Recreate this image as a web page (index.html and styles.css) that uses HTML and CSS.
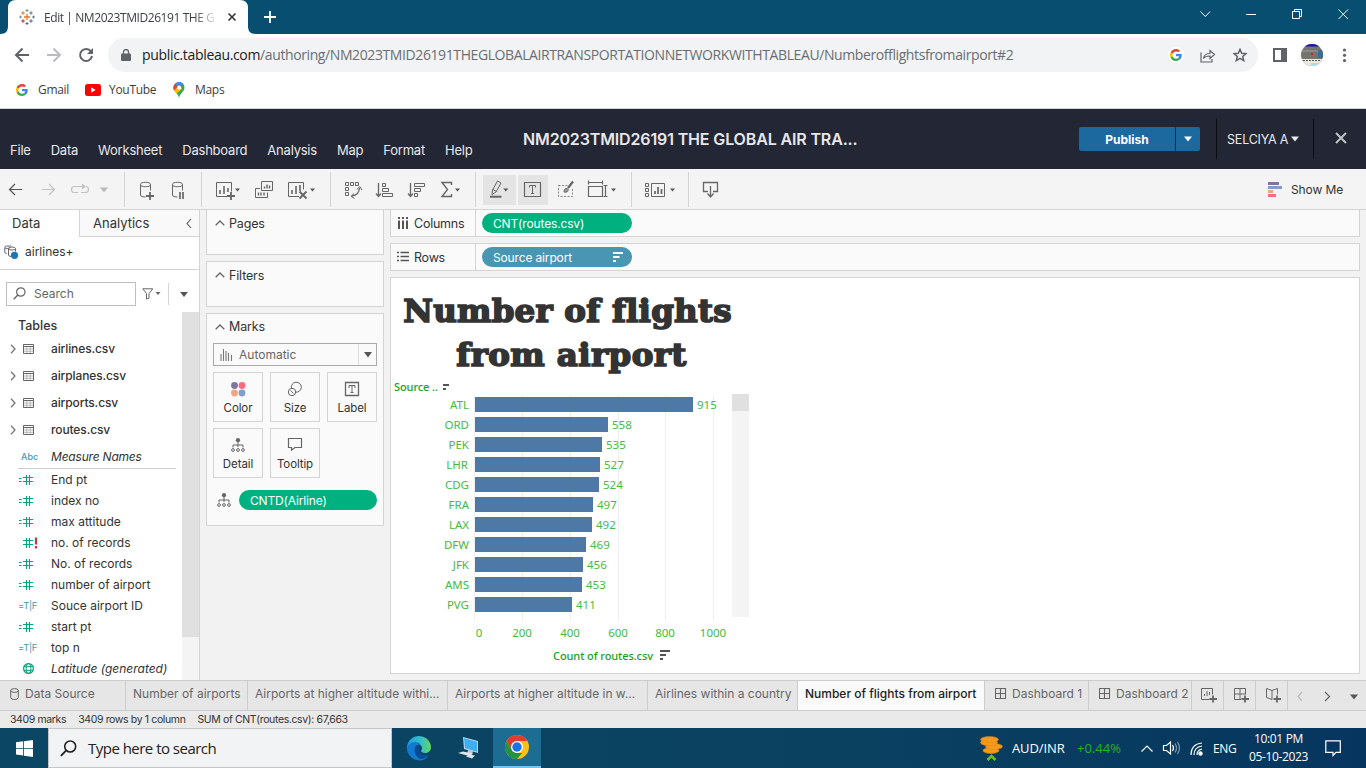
FILE: index.html
```html
<!DOCTYPE html>
<html lang="en">
<head>
<meta charset="utf-8">
<title>Edit | NM2023TMID26191 THE GLOBAL AIR TRANSPORTATION NETWORK</title>
<link rel="stylesheet" href="styles.css">
</head>
<body>
<svg class="defs" width="0" height="0">
  <symbol id="g" viewBox="0 0 48 48"><path fill="#ea4335" d="M24 9.5c3.5 0 6.700 1.200 9.200 3.600l6.900-6.900C35.900 2.400 30.500 0 24 0 14.600 0 6.500 5.400 2.600 13.200l8 6.200C12.400 13.700 17.700 9.500 24 9.500z"/><path fill="#4285f4" d="M47 24.600c0-1.600-.2-3.100-.4-4.600H24v9h12.900c-.6 3-2.300 5.500-4.800 7.200l7.700 6C44.400 38 47 31.800 47 24.600z"/><path fill="#fbbc05" d="M10.500 28.600a14.500 14.500 0 0 1 0-9.200l-8-6.200a24 24 0 0 0 0 21.600z"/><path fill="#34a853" d="M24 48c6.500 0 11.900-2.100 15.900-5.800l-7.700-6c-2.200 1.500-4.900 2.300-8.200 2.300-6.300 0-11.600-4.200-13.500-9.900l-8 6.200C6.500 42.600 14.600 48 24 48z"/></symbol>
  <symbol id="table" viewBox="0 0 11 10"><path d="M.5.500h10v9H.500zM.5 2.500h10" fill="none" stroke="#666"/><path d="M1 5h9M1 7.300h9M3.800 3v6M7.200 3v6" stroke="#aaa" stroke-width=".8"/></symbol>
  <symbol id="chev" viewBox="0 0 6 10"><path d="M1 .8l4 4.200-4 4.200" fill="none" stroke="#777" stroke-width="1.300"/></symbol>
  <symbol id="up" viewBox="0 0 10 6"><path d="M.7 5.300L5 1l4.300 4.300" fill="none" stroke="#666" stroke-width="1.300"/></symbol>
  <symbol id="hash" viewBox="0 0 16 12"><path d="M5 3.500h10M5 7.500h10M8.500 1v10M11.500 1v10M1 4.500h2.500M1 7.500h2.500" stroke="#00a67c" stroke-width="1.100"/></symbol>
  <symbol id="tree" viewBox="0 0 14 14"><circle cx="7" cy="2.200" r="2.100" fill="#666"/><path d="M7 4v5M2 9.500V7h10v2.500" fill="none" stroke="#666"/><g fill="none" stroke="#666"><circle cx="2" cy="12" r="1.400"/><circle cx="7" cy="12" r="1.400"/><circle cx="12" cy="12" r="1.400"/></g></symbol>
  <symbol id="dash" viewBox="0 0 12 12"><path d="M.5.500h10v10H.500zM.5 5.500h10M5.500.5v10" fill="none" stroke="#666" stroke-width="1.100"/></symbol>
  <symbol id="mag" viewBox="0 0 13 13"><circle cx="7.800" cy="5" r="4.200" fill="none" stroke="currentColor" stroke-width="1.200"/><path d="M4.800 8L.7 12.200" stroke="currentColor" stroke-width="1.400"/></symbol>
  <symbol id="sort" viewBox="0 0 10 10"><path d="M0 1h10M0 5h6.500M0 9h3" stroke="currentColor" stroke-width="2"/></symbol>
</svg>

<header class="tabstrip">
  <svg class="tabshape" viewBox="0 0 256 34"><path fill="#fff" d="M0 34c6 0 8-3 8-8V8q0-8 8-8h224q8 0 8 8v18c0 5 2 8 8 8z"/></svg>
  <div class="tab">
    <svg width="16" height="16" viewBox="0 0 16 16" fill="none" stroke-width="1"><path d="M8 5v6M5 8h6" stroke="#e8762d" stroke-width="1.300"/><path d="M4 2.200v3.600M2.200 4h3.600" stroke="#e8762d"/><path d="M12 10.200v3.600M10.200 12h3.600M8 13v3M6.500 14.500h3" stroke="#5b6591"/><path d="M4 10.200v3.600M2.200 12h3.600" stroke="#c72035"/><path d="M12 2.200v3.600M10.200 4h3.600M14.500 6.500v3M13 8h3" stroke="#5c7f92"/><path d="M8 0v3M6.500 1.500h3M1.500 6.500v3M0 8h3" stroke="#7099a6"/></svg>
    <span class="tabname">Edit | NM2023TMID26191 THE G</span>
    <svg width="10" height="10" viewBox="0 0 10 10"><path d="M1.500 1.500l7 7M8.500 1.500l-7 7" stroke="#333" stroke-width="1.600"/></svg>
  </div>
  <svg class="plus" width="14" height="14" viewBox="0 0 14 14"><path d="M7 1v12M1 7h12" stroke="#fff" stroke-width="1.800"/></svg>
  <svg class="wincontrols" width="166" height="34" viewBox="1200 0 166 34" fill="none" stroke="#fff"><path d="M1200.500 11.500l4.800 5 4.800-5"/><path d="M1246 14.500h10"/><path d="M1292.500 11.500h7v7h-7zM1294.500 11v-1.500h7v7h-1.500"/><path d="M1338.500 9.500l9.500 9.500M1348 9.500l-9.500 9.500"/></svg>
</header>

<div class="navbar">
  <svg width="100" height="42" viewBox="0 34 100 42" fill="none" stroke-width="2"><path d="M29 55H16.500M22.500 48.500L16 55l6.500 6.500" stroke="#5f6368"/><path d="M47 55h12.500M53.500 48.500L60 55l-6.500 6.500" stroke="#babcbe"/><path d="M91 51.500a6 6 0 1 0 1 4.500" stroke="#5f6368"/><path d="M93 48v6h-6z" fill="#5f6368"/></svg>
  <div class="urlbar">
    <svg width="10" height="13" viewBox="0 0 10 13"><path d="M1 4.500h8q1 0 1 1V11q0 1-1 1H1q-1 0-1-1V5.500q0-1 1-1z" fill="#5f6368"/><path d="M2.500 5V3a2.500 2.500 0 0 1 5 0v2" fill="none" stroke="#5f6368" stroke-width="1.300"/></svg>
    <span class="url"><b>public.tableau.com</b>/authoring/NM2023TMID26191THEGLOBALAIRTRANSPORTATIONNETWORKWITHTABLEAU/Numberofflightsfromairport#2</span>
    <i class="gbadge"><svg width="12" height="12"><use href="#g"/></svg></i>
    <svg width="16" height="15" viewBox="0 0 16 15" fill="none" stroke="#5f6368" stroke-width="1.200"><path d="M1 4.500v9.500h11v-3M3.500 10.500c.5-3.500 3-5 6.500-5V2.500l4.500 4-4.500 4V8c-3 0-5 .5-6.500 2.500z"/></svg>
    <svg class="star" width="14" height="14" viewBox="0 0 14 14" fill="none" stroke="#5f6368" stroke-width="1.500"><path d="M7 1.400l1.700 3.900 4.200.4-3.200 2.800 1 4.100L7 10.400l-3.700 2.200 1-4.100L1.100 5.700l4.200-.4z"/></svg>
  </div>
  <svg width="92" height="42" viewBox="1270 34 92 42"><path d="M1274 49h12v12h-12z" fill="none" stroke="#5f6368" stroke-width="2"/><path d="M1281 49h5v12h-5z" fill="#5f6368"/>
    <clipPath id="av"><circle cx="1312" cy="55" r="11"/></clipPath><g clip-path="url(#av)"><path fill="#77746b" d="M1300 43h24v24h-24z"/><path fill="#1b12b8" d="M1300 43h24v3.500h-24z"/><path fill="#85898a" d="M1300 50h24v2h-24z"/><path fill="#3c6c98" d="M1318 50h6v8h-6z"/><path fill="#b92c2c" d="M1311 53h2v2h-2z"/><path fill="#e9e9df" d="M1300 59h24v8h-24z"/><path stroke="#555" stroke-dasharray="2 1" d="M1303 60.500h18"/><path fill="#a9dcee" d="M1311 63h12v4h-12z"/></g>
    <g fill="#5f6368"><circle cx="1344.500" cy="50" r="1.600"/><circle cx="1344.500" cy="55.300" r="1.600"/><circle cx="1344.500" cy="60.600" r="1.600"/></g></svg>
</div>

<div class="bookmarks">
  <svg width="12" height="12"><use href="#g"/></svg><span class="bm1">Gmail</span>
  <svg width="16" height="12" viewBox="0 0 16 12"><rect width="16" height="12" rx="2.500" fill="#f00"/><path d="M6.200 3.300v5.400L10.600 6z" fill="#fff"/></svg><span class="bm2">YouTube</span>
  <svg width="12" height="16" viewBox="0 0 12 16"><path fill="#34a853" d="M6 0a5.500 5.500 0 0 1 5.500 5.500C11.500 9.500 7 11 6 16 5 11 .5 9.500.5 5.500A5.500 5.500 0 0 1 6 0z"/><path fill="#fbbc04" d="M.9 7.500L7 2l2 5-5.500 4.500C2.300 10.200 1.300 9 .9 7.500z"/><path fill="#4285f4" d="M2 2L6 5.500 10.300 2A5.500 5.500 0 0 0 4 .4z"/><path fill="#ea4335" d="M2 2L5 4.500 1 8.500A5.500 5.500 0 0 1 2 2z"/><circle cx="6" cy="5.500" r="2" fill="#fff"/></svg><span>Maps</span>
</div>

<div class="apphead">
  <nav class="menu"><span>File</span><span>Data</span><span>Worksheet</span><span>Dashboard</span><span>Analysis</span><span>Map</span><span>Format</span><span>Help</span></nav>
  <h1>NM2023TMID26191 THE GLOBAL AIR TRA...</h1>
  <div class="account">
    <div class="publish">Publish</div><div class="pubmore"><svg width="8" height="6"><path d="M0 .5h8L4 5.500z" fill="#fff"/></svg></div>
    <div class="user"><span>SELCIYA A</span><svg width="8" height="6"><path d="M0 .5h8L4 5.500z" fill="#eee"/></svg></div>
    <svg width="12" height="12"><path d="M1 1l10 10M11 1L1 11" stroke="#c3c3c8" stroke-width="1.900"/></svg>
  </div>
</div>

<div class="toolbar">
  <svg width="124" height="40" viewBox="0 169 124 40" fill="none" stroke-width="1.200"><path d="M22 189.500H9.500M15 184l-5.500 5.500 5.500 5.500" stroke="#555"/><g stroke="#c2c2c2"><path d="M42 189.500h12.500M49 184l5.500 5.500-5.500 5.500"/><path d="M78 192.500h-4q-2.500 0-2.500-3t2.500-3h10M81 192.500h4.500q3 0 3-3t-2.500-3"/></g><path d="M82 183.500v6l4-3z" fill="#c2c2c2"/><path d="M100 187.500h8l-4 5z" fill="#bbb"/></svg>
  <svg width="77" height="40" viewBox="124 169 77 40" fill="none" stroke="#666"><path d="M140.500 184.500v11q1 1.500 5 1.500M150.500 184.500v6"/><ellipse cx="145.500" cy="184.500" rx="5" ry="2.200"/><path d="M150 192v8M146 196h8" stroke-width="1.800"/><path d="M172.500 184.500v11q1 1.500 5 1.500M182.500 184.500v6"/><ellipse cx="177.500" cy="184.500" rx="5" ry="2.200"/><path d="M180 192v7M183 192v7" stroke-width="1.700"/></svg>
  <svg width="129" height="40" viewBox="201 169 129 40" fill="none" stroke="#666"><path d="M227 196.500h-10.500v-14h15v9"/><path d="M220 194v-4M224 194v-8M228 192v-4" stroke-width="1.600"/><path d="M231 192v8M227 196h8" stroke-width="1.800"/><path d="M235 188.500h5l-2.500 3z" fill="#555" stroke="none"/><path d="M261.500 181.500h11v9h-11zM260 188.500h-4.500v9h12v-5"/><path d="M264.500 188.500v-2M267 188.500v-4M269.500 188.500v-3M258.500 195.500v-3M261 195.500v-3M264 195.500v-3" stroke-width="1.400"/><path d="M299 196.500h-10.500v-14h15v7"/><path d="M292 194v-4M296 194v-8M300 191v-6" stroke-width="1.600"/><path d="M299.500 191.500l7 7M306.500 191.500l-7 7" stroke-width="1.800"/><path d="M310 188.500h5l-2.500 3z" fill="#555" stroke="none"/></svg>
  <svg width="145" height="40" viewBox="330 169 145 40" fill="none" stroke="#666"><path d="M345.500 182.500h3v3h-3zM350.500 182.500h3v3h-3zM355.500 182.500h3v3h-3zM345.500 187.500h3v3h-3zM345.500 192.500h3v3h-3z"/><path d="M352 196q7-1 7.500-8" stroke-width="1.300"/><path d="M357 189.500l2.700-3 2.300 3.500M354 193.500l-3 2.800 3.500 2.200"/><path d="M378.500 183v13M376 193.500l2.500 3 2.500-3" stroke-width="1.300"/><path d="M382.500 183.500h3v3h-3zM382.500 188.500h6v3h-6zM382.500 193.500h10v3h-10z"/><path d="M410.500 183v13M408 193.500l2.500 3 2.500-3" stroke-width="1.300"/><path d="M414.500 183.500h10v3h-10zM414.500 188.500h6v3h-6zM414.500 193.500h3v3h-3z"/><path d="M451.500 185v-2.500H442l5.500 7-5.500 7h9.500V194" stroke-width="1.400"/><path d="M455 188.500h5l-2.500 3z" fill="#555" stroke="none"/></svg>
  <svg width="156" height="40" viewBox="475 169 156 40" fill="none" stroke="#666"><path d="M483 175h33v30h-33zM518 175h30v30h-30z" fill="#e4e4e4" stroke="none"/><path d="M492.500 190l5-9 3.500 2-5 9-4 2.500zM493 189.500l3.500 2"/><path d="M490 196.700h11.500" stroke-width="2"/><path d="M503.300 188.500h5l-2.500 3z" fill="#555" stroke="none"/><path d="M524.500 182.500h16v14h-16z" stroke-width="1.200"/><path d="M529.500 187.500v-2h6v2M532.500 185.500v8M531 193.500h3"/><path d="M558.500 185.500h9M572.500 189v7.500h-14v-11" stroke="#888" stroke-dasharray="2 1.500"/><path d="M573 181.500l-5 6.500" stroke-width="2.200"/><path d="M567.500 188.500q-3.500-.5-3.500 3.500 3.500 1 4.500-2.500" fill="#999"/><path d="M588.500 182.500h14M588.500 180.500v4M602.500 180.500v4M588.500 186.500h14v10h-14zM605.500 185.500v11M603.500 185.500h4M603.500 196.500h4" stroke-width="1.200"/><path d="M611 188.500h5l-2.500 3z" fill="#555" stroke="none"/></svg>
  <svg width="57" height="40" viewBox="631 169 57 40" fill="none" stroke="#666"><path d="M645.500 183.500h3v3h-3zM645.500 188.500h3v3h-3zM645.500 193.500h3v3h-3zM651.500 183.500h13v13h-13z"/><path d="M655 194v-3M658 194v-7M661.500 194v-5" stroke-width="1.700"/><path d="M670 188.500h5l-2.500 3z" fill="#555" stroke="none"/></svg>
  <svg width="40" height="40" viewBox="688 169 40 40" fill="none" stroke="#666" stroke-width="1.300"><path d="M708 191.500h-4.500v-9h14v9H713M710.500 186v11M707.500 193.500l3 3.500 3-3.500"/></svg>
  <div class="showme"><svg width="14" height="15"><path fill="#8074a0" d="M0 0h11v3H0z"/><path fill="#7f9ecb" d="M0 4h14v3H0z"/><path fill="#f2a47c" d="M0 8h5v3H0z"/><path fill="#fb6b7c" d="M0 12h8v3H0z"/></svg><span>Show Me</span></div>
</div>

<main>
  <aside class="data">
    <div class="dtabs"><div class="dt on">Data</div><div class="dt2"><span>Analytics</span><svg width="6" height="11" viewBox="0 0 6 11"><path d="M5 1L1 5.500l4 4.500" fill="none" stroke="#555" stroke-width="1.100"/></svg></div></div>
    <div class="source"><svg width="15" height="14" viewBox="0 0 15 14" fill="none" stroke="#666"><path d="M7 1H2.500Q.8 1 .8 2.500V7q0 1.500 2 1.500M.8 3q3 1 5 0"/><ellipse cx="8" cy="3.500" rx="3.500" ry="1.500"/><path d="M4.500 3.500V10q0 1.500 2.500 1.500M11.500 3.500v3"/><circle cx="10.500" cy="10.300" r="3.600" fill="#1f77b0" stroke="none"/></svg><span>airlines+</span></div>
    <div class="searchrow"><div class="search"><svg width="13" height="13"><use href="#mag"/></svg><span>Search</span></div>
      <svg width="20" height="12" viewBox="0 0 20 12"><path d="M.8.800h10L7 5.500v4.700l-2.500.8V5.500z" fill="none" stroke="#666"/><path d="M13.500 4h5L16 7z" fill="#666"/></svg><i class="vline"></i><svg width="8" height="5"><path d="M0 0h8L4 5z" fill="#555"/></svg></div>
    <div class="tree">
      <div class="list">
        <div class="th">Tables</div>
        <div class="tr"><svg width="6" height="10"><use href="#chev"/></svg><svg width="11" height="10"><use href="#table"/></svg><span>airlines.csv</span></div>
        <div class="tr"><svg width="6" height="10"><use href="#chev"/></svg><svg width="11" height="10"><use href="#table"/></svg><span>airplanes.csv</span></div>
        <div class="tr"><svg width="6" height="10"><use href="#chev"/></svg><svg width="11" height="10"><use href="#table"/></svg><span>airports.csv</span></div>
        <div class="tr"><svg width="6" height="10"><use href="#chev"/></svg><svg width="11" height="10"><use href="#table"/></svg><span>routes.csv</span></div>
        <div class="mn"><b>Abc</b><em>Measure Names</em></div>
        <div class="fd"><svg width="16" height="12"><use href="#hash"/></svg><span>End pt</span></div>
        <div class="fd"><svg width="16" height="12"><use href="#hash"/></svg><span>index no</span></div>
        <div class="fd"><svg width="16" height="12"><use href="#hash"/></svg><span>max attitude</span></div>
        <div class="fd bad"><svg width="20" height="12" viewBox="0 0 20 12"><path d="M5 3.500h10M5 7.500h10M8.500 1v10M11.500 1v10" stroke="#00a67c" stroke-width="1.100"/><path d="M18 .5v7M18 9v2.500" stroke="#c9364a" stroke-width="2.200"/></svg><span>no. of records</span></div>
        <div class="fd"><svg width="16" height="12"><use href="#hash"/></svg><span>No. of records</span></div>
        <div class="fd"><svg width="16" height="12"><use href="#hash"/></svg><span>number of airport</span></div>
        <div class="fd"><b>=T|F</b><span>Souce airport ID</span></div>
        <div class="fd"><svg width="16" height="12"><use href="#hash"/></svg><span>start pt</span></div>
        <div class="fd"><b>=T|F</b><span>top n</span></div>
        <div class="fd"><svg class="globe" width="11" height="11" viewBox="0 0 11 11" fill="none" stroke="#00a67c"><circle cx="5.500" cy="5.500" r="4.900" stroke-width="1.200"/><ellipse cx="5.500" cy="5.500" rx="2.300" ry="4.900"/><path d="M.8 3.700h9.400M.8 7.300h9.400"/></svg><em>Latitude (generated)</em></div>
      </div>
      <div class="scroll"><i></i></div>
    </div>
  </aside>

  <section class="cards">
    <div class="card small"><h2><svg width="10" height="6"><use href="#up"/></svg>Pages</h2></div>
    <div class="card small"><h2><svg width="10" height="6"><use href="#up"/></svg>Filters</h2></div>
    <div class="card marks"><h2><svg width="10" height="6"><use href="#up"/></svg>Marks</h2>
      <div class="select"><svg width="13" height="13" viewBox="0 0 13 13" stroke-width="1.100"><path d="M1 13V6M3.500 13V1M6 13V3M8.500 13V5M11.500 13V7" stroke="#777"/></svg><span>Automatic</span><i><svg width="8" height="6"><path d="M0 0h8L4 5.500z" fill="#555"/></svg></i></div>
      <div class="btns">
        <div><svg width="16" height="16"><circle cx="4.500" cy="4.500" r="3.400" fill="#8074a0"/><circle cx="12" cy="4.500" r="3.400" fill="#fb6b7c"/><circle cx="4.500" cy="12" r="3.400" fill="#f2a47c"/><circle cx="12" cy="12" r="3.400" fill="#7f9ecb"/></svg><span>Color</span></div>
        <div><svg width="16" height="16" fill="none" stroke="#666"><path d="M4.500 7.500A5 5 0 1 1 8 11"/><circle cx="5" cy="11" r="3.700"/><path d="M3.500 9.500l3 3"/></svg><span>Size</span></div>
        <div><svg width="16" height="16" fill="none" stroke="#666"><path d="M1.500 1.500h13v13h-13z" stroke-width="1.300"/><path d="M5 7V4.500h6V7M8 4.500v7M6.500 11.500h3"/></svg><span>Label</span></div>
        <div><svg width="16" height="16"><use href="#tree" x="1" y="1" width="14" height="14"/></svg><span>Detail</span></div>
        <div><svg width="16" height="16" fill="none" stroke="#666" stroke-width="1.200"><path d="M1.500 1.500h13v9H8L4.500 13v-2.500h-3z"/></svg><span>Tooltip</span></div>
      </div>
      <div class="enc"><svg width="14" height="14"><use href="#tree"/></svg><div class="pill green">CNTD(Airline)</div></div>
    </div>
  </section>

  <section class="work">
    <div class="shelf"><div class="sl"><svg width="12" height="12" stroke="#555" stroke-width="2"><path d="M2 0v2M2 3.500V12M6 0v2M6 3.500V12M10 0v2M10 3.500V12"/></svg><span>Columns</span></div><div class="pill green">CNT(routes.csv)</div></div>
    <div class="shelf"><div class="sl"><svg width="12" height="12" stroke="#555" stroke-width="1.700"><path d="M0 1.500h2M3.500 1.500H12M0 5.500h2M3.500 5.500H12M0 9.500h2M3.500 9.500H12"/></svg><span>Rows</span></div><div class="pill blue">Source airport<svg width="10" height="10"><use href="#sort"/></svg></div></div>
    <div class="view">
      <div class="vtitle"><div class="l1">Number of flights</div><div class="l2">from airport</div></div>
      <svg class="chart" width="368" height="296" viewBox="391 378 368 296">
        <path d="M474.500 395v226M522.500 395v226M570.500 395v226M618.500 395v226M665.500 395v226M713.500 395v226" stroke="#efefef"/>
        <text class="hdr" x="394" y="391" textLength="44">Source ..</text>
        <path d="M443 385h6M443 389h3" stroke="#555" stroke-width="2"/>
        <g fill="#4e79a7"><path d="M475 397h218v15H475zM475 417h133v15H475zM475 437h127v15H475zM475 457h125v15H475zM475 477h124v15H475zM475 497h118v15H475zM475 517h117v15H475zM475 537h111v15H475zM475 557h108v15H475zM475 577h107v15H475zM475 597h97v15H475z"/></g>
        <g class="lab" text-anchor="end"><text x="469" y="409">ATL</text><text x="469" y="429">ORD</text><text x="469" y="449">PEK</text><text x="468" y="469">LHR</text><text x="469" y="489">CDG</text><text x="469" y="509">FRA</text><text x="469" y="529">LAX</text><text x="469" y="549">DFW</text><text x="469" y="569">JFK</text><text x="469" y="589">AMS</text><text x="469" y="609">PVG</text></g>
        <g class="lab"><text x="697" y="409">915</text><text x="612" y="429">558</text><text x="606" y="449">535</text><text x="604" y="469">527</text><text x="603" y="489">524</text><text x="597" y="509">497</text><text x="596" y="529">492</text><text x="590" y="549">469</text><text x="587" y="569">456</text><text x="586" y="589">453</text><text x="576" y="609">411</text></g>
        <g class="lab" text-anchor="middle"><text x="479" y="637">0</text><text x="522" y="637">200</text><text x="570" y="637">400</text><text x="618" y="637">600</text><text x="665" y="637">800</text><text x="713" y="637">1000</text></g>
        <text class="hdr" x="553" y="660" textLength="100">Count of routes.csv</text>
        <path d="M660 651h10M660 655h6M660 659h3" stroke="#555" stroke-width="2"/>
        <path fill="#f4f4f4" d="M732 394h17v223h-17z"/><path fill="#e0e0e0" d="M732 394h17v17h-17z"/>
      </svg>
    </div>
  </section>
</main>

<div class="sheets">
  <div class="s0"><svg width="9" height="12" viewBox="0 0 9 12" fill="none" stroke="#666"><ellipse cx="4.500" cy="2.500" rx="3.800" ry="1.900"/><path d="M.7 2.500v7q0 2 3.800 2t3.800-2v-7"/></svg>Data Source</div>
  <div class="s1">Number of airports</div><div class="s2">Airports at higher altitude withi...</div><div class="s3">Airports at higher altitude in w...</div><div class="s4">Airlines within a country</div><div class="s5">Number of flights from airport</div>
  <div class="s6"><svg width="12" height="12"><use href="#dash"/></svg>Dashboard 1</div><div class="s7"><svg width="12" height="12"><use href="#dash"/></svg>Dashboard 2</div>
  <div class="ic"><svg width="16" height="16" fill="none" stroke="#666"><path d="M8.500 12.500H.500V1.500h11v6"/><path d="M3.500 9V7M6 9V4M8.500 8V5"/><path d="M12 8.500v7M8.500 12H16" stroke-width="1.800"/></svg></div>
  <div class="ic"><svg width="16" height="16" fill="none" stroke="#666"><path d="M8 12.500H1.500V1.500h11v6M1.500 7h11M7 1.500v11"/><path d="M12 8.500v7M8.500 12H16" stroke-width="1.800"/></svg></div>
  <div class="ic"><svg width="16" height="16" fill="none" stroke="#666"><path d="M7 12.500l-5.500-2V1.500l5.500 2 5.500-2v6M7 3.500v9"/><path d="M12 8.500v7M8.500 12H16" stroke-width="1.800"/></svg></div>
  <svg width="78" height="30" viewBox="1288 681 78 30" fill="none" stroke-width="1.200"><path d="M1302 692l-4 4.500 4 4.500" stroke="#bbb"/><path d="M1325 692l4.500 4.500-4.500 4.500" stroke="#666"/><path d="M1350 694.500h8l-4 5z" fill="#555"/></svg>
</div>
<div class="status"><span>3409 marks</span><span>3409 rows by 1 column</span><span>SUM of CNT(routes.csv): 67,663</span></div>

<footer class="taskbar">
  <div class="start"><svg width="17" height="17" viewBox="0 0 17 17" fill="#fff"><path d="M0 2.300L7.200 1.300V8H0zM8 1.200L17 0v8H8zM0 8.800h7.200v6.700L0 14.500zM8 8.800h9V17l-9-1.300z"/></svg></div>
  <div class="tsearch"><svg width="17" height="17"><use href="#mag"/></svg><span>Type here to search</span></div>
  <div class="app"><svg width="26" height="26" viewBox="0 0 26 26"><defs><linearGradient id="e1" x1="0" x2="1"><stop stop-color="#1b9de2"/><stop offset=".6" stop-color="#35c1c8"/><stop offset="1" stop-color="#62d756"/></linearGradient></defs><path d="M1 14A12 12 0 0 1 25 12c0 4-3 6-6 6-2 0-4-1-4-2s1-1 1-3c0-2-2-4-5-4-4 0-8 2-10 5z" fill="url(#e1)"/><path d="M1 14c0-4 4-7 8-7 3 0 5 1 6 3-5-1-7 3-6 7 1 5 6 6 13 4-3 5-10 5.500-14 3-4-2-7-6-7-10z" fill="#137ad2"/><path d="M11 11c-4 4-2 10 3 13 4 0 7-2 9-5-5 2-10-1-10-5 0-1 .5-2 1-3z" fill="#0b4b96"/></svg></div>
  <div class="app"><svg width="24" height="24" viewBox="0 0 24 24"><path d="M7 1l15 4v12L8 13z" fill="#bcd6e5"/><path d="M8 2.300l13 3.500v10L9 12z" fill="#3eaef2"/><path d="M12 14l5 1-1 4-5-1z" fill="#c3cbd0"/><path d="M2 17l5-1.500 10 2-4 2.500zM10 20.500l3-2 6 1-3 3z" fill="#e0e4e6"/></svg></div>
  <div class="app on"><svg width="24" height="24" viewBox="0 0 24 24"><circle cx="12" cy="12" r="12" fill="#fbc116"/><path d="M12 0a12 12 0 0 1 10.400 6H12L6.800 15 1.600 6A12 12 0 0 1 12 0z" fill="#e33b2e"/><path d="M1.600 6l5.200 9L12 18h5.200L12 24A12 12 0 0 1 1.600 6z" fill="#229342"/><circle cx="12" cy="12" r="6" fill="#fff"/><circle cx="12" cy="12" r="4.700" fill="#1a73e8"/></svg></div>
  <div class="tray">
    <svg width="23" height="26" viewBox="0 0 23 26"><g fill="#f39a1e" stroke="#e08612" stroke-width=".5"><ellipse cx="11" cy="15.500" rx="8" ry="3"/><ellipse cx="14" cy="11.500" rx="8.500" ry="3"/><ellipse cx="9" cy="7.500" rx="8.500" ry="3.200"/><ellipse cx="9.500" cy="4.500" rx="9" ry="3"/></g><path d="M7.500 25l4-4 4 4" stroke="#6cc024" stroke-width="2.600" fill="none"/></svg>
    <span class="fx">AUD/INR</span><span class="pct">+0.44%</span>
    <svg class="tico" width="66" height="40" viewBox="1140 728 66 40" fill="none" stroke="#fff" stroke-width="1.200"><path d="M1141.500 751.500l5.500-5.500 5.500 5.500"/><path d="M1163.500 745.500h3l4-3.500v12l-4-3.500h-3z"/><path d="M1172.500 745q2 3 0 6"/><path d="M1175 743.500q3 4.500 0 9M1177.500 742q4 6 0 12" stroke="#7f9bb1"/><path d="M1191 755q0-11 11-12M1194 755q0-8 8-9M1197 755q0-5 5-6" /><circle cx="1200.500" cy="753.500" r="1.600" fill="#fff"/></svg>
    <span class="eng">ENG</span>
    <div class="clock"><span>10:01 PM</span><span>05-10-2023</span></div>
    <svg width="16" height="17" fill="none" stroke="#fff" stroke-width="1.200"><path d="M.8.800h14.500v11.500H11L8 15.500v-3.200H.800z"/></svg>
  </div>
</footer>
</body>
</html>
```
FILE: styles.css
```css
* { box-sizing: border-box; }
body { margin: 0; width: 1366px; height: 768px; overflow: hidden; background: #f2f2f2; font-family: Inter, "Liberation Sans", sans-serif; font-size: 12px; color: #333; white-space: nowrap; }
svg { display: block; flex: none; }
.defs { position: absolute; }
i, b { font-style: normal; }

.tabstrip { position: relative; height: 34px; background: #074e70; display: flex; align-items: center; font-family: "Open Sans", sans-serif; }
.tabshape { position: absolute; left: 0; top: 0; width: 256px; height: 34px; }
.tab { position: relative; width: 248px; padding-left: 19px; display: flex; align-items: center; }
.tabname { width: 174px; margin: 0 9px 0 9px; overflow: hidden; font-size: 12px; letter-spacing: -.42px; -webkit-mask-image: linear-gradient(90deg, #000 150px, transparent 174px); mask-image: linear-gradient(90deg, #000 150px, transparent 174px); color: #3c4043; }
.plus { margin-left: 15px; }
.wincontrols { margin-left: auto; }

.navbar { height: 42px; background: #fff; display: flex; align-items: center; }
.urlbar { margin-left: 8px; width: 1150px; height: 34px; border-radius: 17px; background: #f1f3f4; display: flex; align-items: center; padding-left: 13px; font-family: "Open Sans", sans-serif; font-size: 14px; }
.url { width: 1026px; margin: -2px 0 0 11px; color: #6a6e73; letter-spacing: -.4px; }
.url b { font-weight: 400; color: #202124; letter-spacing: -.33px; }
.gbadge { width: 16px; height: 16px; border-radius: 8px; background: #fff; display: grid; place-items: center; margin-right: 16px; }
.star { margin-left: 17px; }
.navbar > svg:last-child { margin-left: 12px; }

.bookmarks { height: 33px; background: #fff; border-bottom: 1px solid #cfd3d6; display: flex; align-items: center; padding: 0 0 5px 16px; font-family: "Open Sans", sans-serif; font-size: 12px; letter-spacing: -.3px; color: #3c4043; }
.bookmarks span { margin-left: 10px; }
.bookmarks .bm1 { width: 47px; }
.bookmarks .bm2 { width: 64px; margin-left: 8px; }

.apphead { height: 60px; background: #232635; color: #e8e8ea; display: grid; grid-template-columns: 523px 556px 1fr; align-items: center; }
.menu { display: flex; padding: 21px 0 0 10px; gap: 20px; font-size: 13px; letter-spacing: -.22px; }
.apphead h1 { margin: 0; font-size: 16px; font-weight: 600; letter-spacing: -.14px; }
.account { display: flex; align-items: center; }
.publish { width: 96px; height: 24px; background: #1b699f; border-radius: 2px 0 0 2px; font-size: 12px; font-weight: 700; color: #fff; display: grid; place-items: center; }
.pubmore { width: 24px; height: 24px; margin-left: 1px; background: #1b699f; border-radius: 0 2px 2px 0; display: grid; place-items: center; }
.user { margin-left: 16px; width: 98px; height: 40px; flex: none; border: solid #0b0c12; border-width: 0 1px; display: flex; align-items: center; gap: 3px; padding-left: 10px; font-size: 12.500px; letter-spacing: -.2px; }
.account > svg { margin: -2px 0 0 21px; }

.toolbar { height: 40px; background: #f4f4f4; display: flex; }
.toolbar > svg + svg { background: linear-gradient(#d4d4d4, #d4d4d4) 0 3px / 1px 35px no-repeat; }
.showme { margin-left: auto; width: 98px; display: flex; align-items: center; gap: 9px; font-size: 12px; letter-spacing: -.1px; }

main { height: 471px; display: grid; grid-template-columns: 200px 184px 976px; border-top: 1px solid #d4d4d4; }
.data { background: #fff; border-right: 1px solid #d4d4d4; height: 470px; overflow: hidden; }
.dtabs { display: flex; height: 27px; font-size: 13px; }
.dt { width: 79px; padding: 5px 0 0 12px; }
.dt2 { flex: 1; background: #f9f9f9; border: solid #d4d4d4; border-width: 0 0 1px 1px; display: flex; justify-content: space-between; align-items: center; padding: 0 7px 0 13px; }
.source { height: 33px; border-bottom: 1px solid #d4d4d4; display: flex; align-items: center; gap: 6px; padding: 0 0 3px 4px; }
.searchrow { height: 43px; display: flex; align-items: center; padding: 5px 0 0 6px; }
.search { width: 130px; height: 24px; border: 1px solid #c0c0c0; display: flex; align-items: center; gap: 8px; padding: 0 0 1px 6px; margin-right: 6px; color: #666; }
.vline { width: 1px; height: 22px; background: #d4d4d4; margin: 0 11px 0 6px; }
.tree { display: flex; height: 367px; }
.list { width: 182px; padding-top: 3px; font-size: 12px; }
.scroll { width: 17px; margin-top: -1px; background: #f4f4f4; }
.scroll i { display: block; height: 325px; background: #e0e0e0; }
.th { padding-left: 18px; height: 19px; line-height: 19px; font-size: 12.500px; font-weight: 500; }
.tr { height: 27px; display: flex; align-items: center; padding-left: 10px; font-weight: 500; letter-spacing: -.12px; }
.tr svg + svg { margin: 0 17px 0 7px; }
.mn { height: 26px; margin: 0 6px 0 18px; border-bottom: 1px solid #ccc; display: flex; align-items: center; padding: 2px 0 0 3px; }
.mn em { letter-spacing: -.2px; }
.list b { color: #4996b2; font-weight: 500; font-size: 9px; }
.mn b { width: 30px; }
.fd { height: 21px; display: flex; align-items: center; padding-left: 18px; }
.fd > :first-child { margin-right: 17px; }
.fd.bad > svg { margin-right: 13px; }
.fd > b:first-child { width: 20px; margin-right: 13px; font-size: 9.500px; font-weight: 400; letter-spacing: -.5px; }
.fd .globe { margin: 0 17px 0 5px; }

.cards { padding-left: 6px; }
.card { width: 178px; border: 1px solid #d4d4d4; background: #fafafa; margin-bottom: 6px; margin-top: -1px; }
.card + .card { margin-top: 0; }
.small { height: 46px; }
.card h2 { margin: 0; height: 26px; display: flex; align-items: center; gap: 4px; padding-left: 8px; font-size: 12.500px; font-weight: 400; letter-spacing: -.15px; }
.marks { height: 213px; padding: 0 6px; }
.marks h2 { padding-left: 2px; height: 28px; padding-bottom: 3px; }
.select { margin-top: 1px; height: 23px; border: 1px solid #aaa; display: flex; align-items: center; padding-left: 6px; gap: 6px; color: #666; }
.select i { width: 18px; height: 21px; border-left: 1px solid #ddd; display: grid; place-items: center; margin-left: auto; }
.btns { display: grid; grid-template-columns: repeat(3, 50px); gap: 6px 7px; margin-top: 6px; }
.btns div { height: 50px; border: 1px solid #d4d4d4; display: flex; flex-direction: column; align-items: center; gap: 4px; padding-top: 8px; font-size: 11.500px; letter-spacing: -.1px; }
.enc { display: flex; align-items: center; gap: 8px; padding: 12px 0 0 4px; }
.pill { height: 20px; border-radius: 10px; padding-left: 11px; line-height: 21px; color: #fff; font-size: 12px; letter-spacing: -.15px; width: 150px; }
.enc .pill { flex: 1; width: auto; }
.green { background: #00b180; }
.blue { background: #4996b2; display: flex; justify-content: space-between; align-items: center; padding-right: 9px; }

.work { padding-left: 6px; }
.shelf { width: 970px; height: 28px; border: 1px solid #d4d4d4; background: #fafafa; display: flex; align-items: center; gap: 6px; margin: -1px 0 6px; }
.shelf + .shelf { margin-top: 0; }
.sl { width: 85px; height: 26px; border-right: 1px solid #d4d4d4; display: flex; align-items: center; gap: 5px; padding-left: 6px; font-size: 12.500px; letter-spacing: -.25px; }
.view { width: 970px; height: 397px; border: 1px solid #d4d4d4; background: #fff; }
.vtitle { width: 353px; height: 100px; padding-top: 11px; text-align: center; font: 700 32.500px/44px "DejaVu Serif", serif; color: #333; -webkit-text-stroke: 1.700px #333; }
.vtitle .l1 { letter-spacing: .2px; }
.vtitle .l2 { padding-left: 8px; letter-spacing: .4px; }
.lab, .hdr { font-family: "Noto Sans", sans-serif; font-size: 11.500px; fill: #44ba44; }
.hdr { fill: #18a418; font-size: 11px; font-weight: 500; }

.sheets { height: 31px; background: #e6e6e6; border: solid #ccc; border-width: 1px 0; display: flex; font-size: 12px; color: #666; }
.sheets > div { flex: none; border-right: 1px solid #ccc; display: flex; align-items: center; padding: 0 0 4px 7px; }
.sheets .s0 { width: 126px; padding-left: 10px; gap: 6px; }
.s1 { width: 122px; } .s2 { width: 200px; } .s3 { width: 200px; } .s4 { width: 150px; }
.sheets .s5 { width: 187px; background: #fafafa; color: #222; font-weight: 500; }
.sheets .s6, .sheets .s7 { gap: 5px; padding-left: 10px; }
.s6 { width: 104px; } .s7 { width: 103px; }
.sheets .ic { width: 32px; padding: 0 0 2px 9px; }
.status { height: 17px; background: #eaeaea; display: flex; align-items: center; gap: 12px; padding-left: 10px; font-size: 10.500px; letter-spacing: -.37px; color: #333; }

.taskbar { height: 40px; background: linear-gradient(90deg, #0b4765, #0a4160 60%, #06365f); display: flex; font-family: "Open Sans", sans-serif; color: #fff; }
.start { width: 48px; display: grid; place-items: center; }
.tsearch { width: 344px; background: #f2f3f5; border: 1px solid #c4c7ca; display: flex; align-items: center; gap: 11px; padding-left: 11px; color: #222; font-size: 15px; letter-spacing: -.52px; }
.app { width: 49px; display: grid; place-items: center; margin-left: 2px; }
.app + .app { margin-left: 0; }
.app.on { width: 48px; margin-left: 1px; background: #1d6d93; border-bottom: 2px solid #76c4ec; }
.tray { margin-left: auto; width: 386px; display: flex; align-items: center; font-size: 13px; }
.fx { margin-left: 9px; width: 65px; font-weight: 500; font-size: 13px; letter-spacing: -.1px; }
.pct { color: #1cb81c; width: 63px; font-weight: 400; }
.eng { margin-left: 7px; font-size: 12px; width: 31px; letter-spacing: -.3px; }
.clock { width: 69px; display: flex; flex-direction: column; align-items: center; font-size: 12px; line-height: 18px; letter-spacing: -.35px; margin-right: 12px; }
```
